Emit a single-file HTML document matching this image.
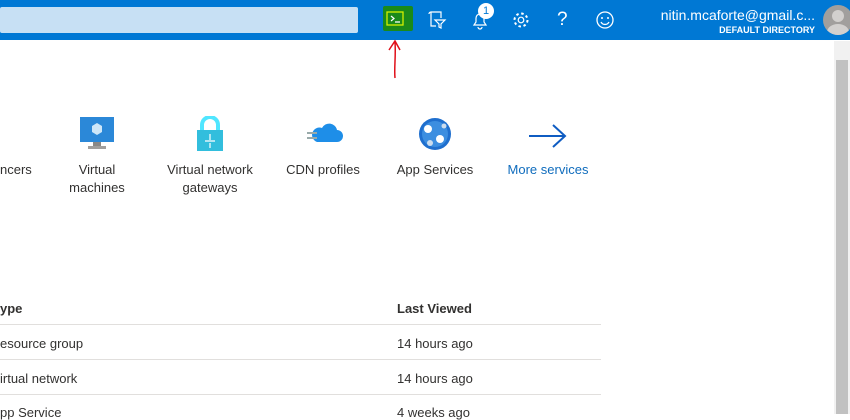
<!DOCTYPE html>
<html><head><style>
body{margin:0;width:850px;height:414px;overflow:hidden;background:#fff;font-family:"Liberation Sans",sans-serif;position:relative;color:#323130}
.top{position:absolute;left:0;top:0;width:850px;height:40px;background:#0078d4}
.search{position:absolute;left:0;top:7px;width:358px;height:26px;background:#c7e0f4;border-radius:2px}
.ic{position:absolute;top:8px}
.lbl{position:absolute;font-size:13px;text-align:center;line-height:18px}
.t{position:absolute;font-size:13px}
.line{position:absolute;left:0;width:601px;height:1px;background:#e1dfdd}
</style></head><body>
<div class="top"></div>
<div class="search"></div>
<div style="position:absolute;left:383px;top:6px;width:30px;height:25px;background:#1a8a1a;border-radius:2px"></div>
<svg class="ic" style="left:385px;top:10px" width="22" height="18"><rect x="2" y="2" width="16" height="13" fill="none" stroke="#d4f000" stroke-width="1.3"/><path d="M6 6l3 2.5-3 2.5M10 12h5" stroke="#fff" fill="none" stroke-width="1.2"/></svg>
<svg class="ic" style="left:427px;top:10px" width="20" height="20"><path d="M4 2h10v6M4 2v14h5M4 2a2 2 0 0 0-2 2M8 10h10l-4 4v4l-2-1v-3z" stroke="#fff" fill="none" stroke-width="1.2"/></svg>
<svg class="ic" style="left:470px;top:10px" width="20" height="20"><path d="M4 15h12l-2-3V8a4 4 0 0 0-8 0v4zM8 17a2 2 0 0 0 4 0" stroke="#fff" fill="none" stroke-width="1.2"/></svg>
<div style="position:absolute;left:478px;top:3px;width:16px;height:16px;border-radius:50%;background:#fff;color:#0078d4;font-size:11px;text-align:center;line-height:16px">1</div>
<svg class="ic" style="left:511px;top:10px" width="20" height="20"><circle cx="10" cy="10" r="2.8" stroke="#fff" fill="none" stroke-width="1.2"/><circle cx="10" cy="10" r="6.5" stroke="#fff" fill="none" stroke-width="2" stroke-dasharray="2.5 2.6"/></svg>
<div style="position:absolute;left:557px;top:9px;color:#fff;font-size:19px">?</div>
<svg class="ic" style="left:595px;top:10px" width="22" height="22"><circle cx="10" cy="10" r="8" stroke="#fff" fill="none" stroke-width="1.3"/><circle cx="7" cy="8" r="1" fill="#fff"/><circle cx="13" cy="8" r="1" fill="#fff"/><path d="M6 12a4.5 4.5 0 0 0 8 0" stroke="#fff" fill="none" stroke-width="1.3"/></svg>
<div style="position:absolute;right:35px;top:7px;color:#fff;font-size:14px">nitin.mcaforte@gmail.c...</div>
<div style="position:absolute;right:35px;top:25px;color:#fff;font-size:9px;font-weight:bold">DEFAULT DIRECTORY</div>
<div style="position:absolute;left:823px;top:5px;width:30px;height:30px;border-radius:50%;background:#a19f9d;overflow:hidden"><div style="position:absolute;left:9px;top:5px;width:12px;height:12px;border-radius:50%;background:#d2d0ce"></div><div style="position:absolute;left:4px;top:19px;width:22px;height:16px;border-radius:50%;background:#d2d0ce"></div></div>
<div style="position:absolute;left:834px;top:41px;width:16px;height:373px;background:#f1f1f1"></div>
<div style="position:absolute;left:836px;top:60px;width:12px;height:354px;background:#c1c1c1"></div>
<svg style="position:absolute;left:380px;top:38px" width="30" height="45"><path d="M15 40C14 30 16 18 15 4M9 12L15 3l5 9" stroke="#e0101a" fill="none" stroke-width="1.5"/></svg>
<div class="lbl" style="left:0;top:161px;text-align:left">ncers</div>
<svg style="position:absolute;left:80px;top:117px" width="34" height="34"><rect x="0" y="0" width="34" height="25" fill="#2b88d8"/><rect x="13" y="25" width="8" height="5" fill="#8a8886"/><rect x="8" y="29" width="18" height="3" fill="#a19f9d"/><path d="M17 6l5 3v6l-5 3-5-3V9z" fill="#cde6f8"/></svg>
<div class="lbl" style="left:60px;top:161px;width:74px">Virtual<br>machines</div>
<svg style="position:absolute;left:196px;top:116px" width="28" height="36"><path d="M6 14V9a8 8 0 0 1 16 0v5" stroke="#50e6ff" stroke-width="4" fill="none"/><rect x="1" y="14" width="26" height="21" fill="#32bedd"/><path d="M14 18v6M9 25h10M14 27v5" stroke="#fff" stroke-width="1.2"/></svg>
<div class="lbl" style="left:155px;top:161px;width:110px">Virtual network<br>gateways</div>
<svg style="position:absolute;left:305px;top:122px" width="38" height="24"><path d="M12 20h20a6 6 0 0 0 0-12 8 8 0 0 0-15-2 6 6 0 0 0-5 14z" fill="#1e8ee8"/><path d="M2 11h10M2 16h10" stroke="#9aa" stroke-width="2"/></svg>
<div class="lbl" style="left:280px;top:161px;width:86px">CDN profiles</div>
<svg style="position:absolute;left:418px;top:117px" width="34" height="34"><circle cx="17" cy="17" r="16" fill="#1f6fce"/><circle cx="17" cy="17" r="13" fill="#3c8ee0"/><circle cx="10" cy="12" r="4" fill="#fff"/><circle cx="22" cy="22" r="4" fill="#fff"/><circle cx="12" cy="26" r="3" fill="#cde"/><circle cx="26" cy="9" r="2.5" fill="#cde"/></svg>
<div class="lbl" style="left:390px;top:161px;width:90px">App Services</div>
<svg style="position:absolute;left:527px;top:122px" width="42" height="28"><path d="M2 14h36M26 3l12 11-12 11" stroke="#0f5cc2" stroke-width="2" fill="none"/></svg>
<div class="lbl" style="left:500px;top:161px;width:96px;color:#0f6cbd">More services</div>
<div class="t" style="left:0;top:301px;font-weight:600">ype</div>
<div class="t" style="left:397px;top:301px;font-weight:600">Last Viewed</div>
<div class="line" style="top:324px"></div>
<div class="t" style="left:0;top:336px">esource group</div>
<div class="t" style="left:397px;top:336px">14 hours ago</div>
<div class="line" style="top:359px"></div>
<div class="t" style="left:0;top:371px">irtual network</div>
<div class="t" style="left:397px;top:371px">14 hours ago</div>
<div class="line" style="top:394px"></div>
<div class="t" style="left:0;top:405px">pp Service</div>
<div class="t" style="left:397px;top:405px">4 weeks ago</div>
</body></html>
